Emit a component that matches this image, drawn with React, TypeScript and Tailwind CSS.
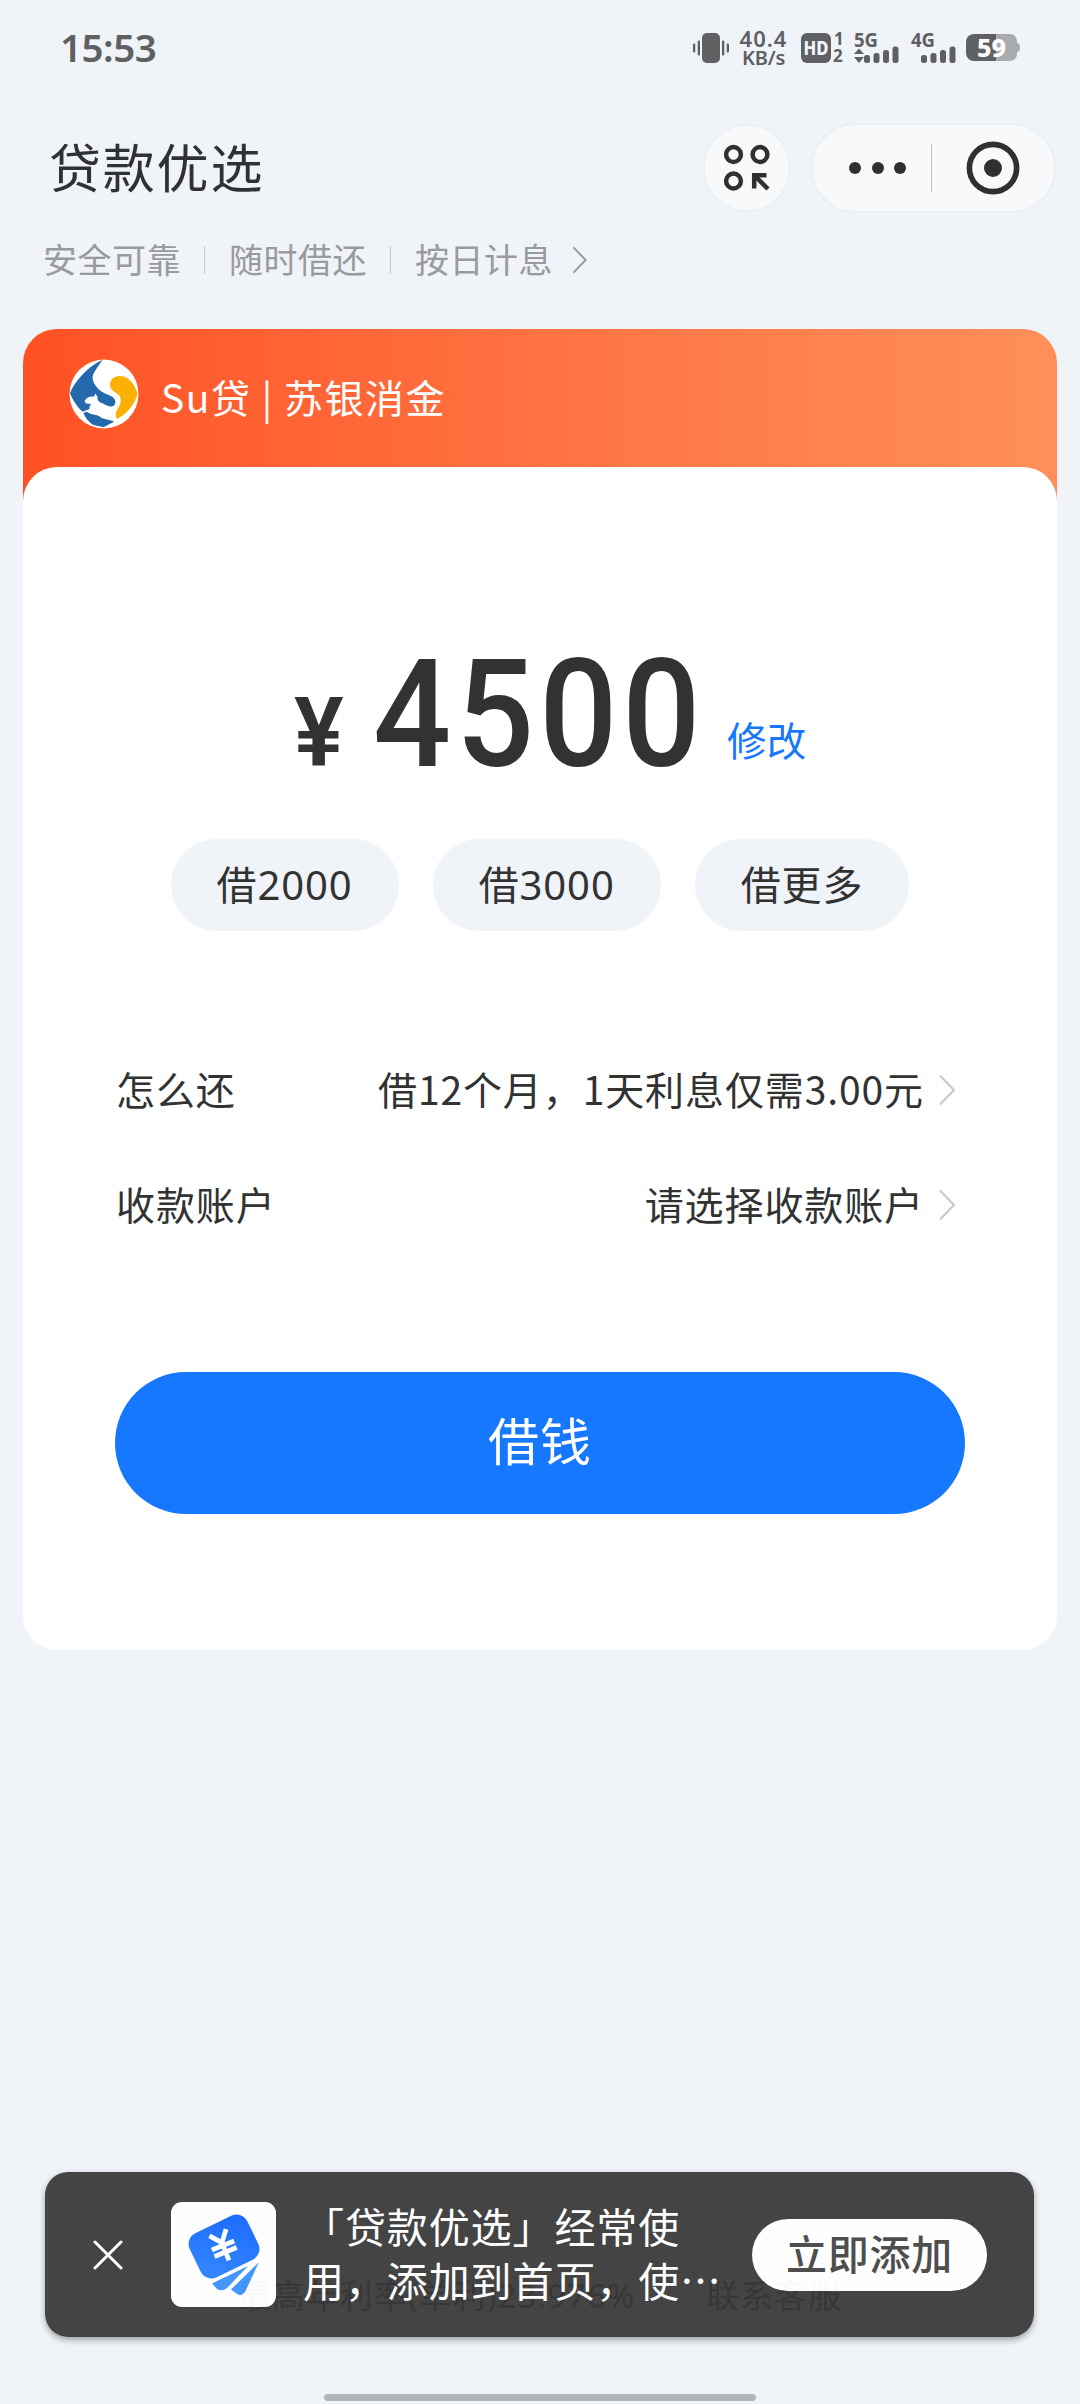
import type { ReactNode } from "react";

const presets = ["借2000", "借3000", "借更多"];

const details = [
  { label: "怎么还", value: "借12个月，1天利息仅需3.00元" },
  { label: "收款账户", value: "请选择收款账户" },
];

function Chevron({ className }: { className: string }) {
  return (
    <svg viewBox="0 0 17 32" fill="none" stroke="currentColor" className={className}>
      <path d="M1.5 1.5 15.5 16 1.5 30.5" strokeWidth="2.2" />
    </svg>
  );
}

function Signal({ label, arrows }: { label: string; arrows?: boolean }) {
  return (
    <svg width="46" height="32" viewBox="0 0 46 32" fill="#5f6062" className="overflow-visible">
      <text x="0" y="15" fontSize="20" fontWeight="700" textLength="24" lengthAdjust="spacingAndGlyphs">
        {label}
      </text>
      {arrows && <path d="M0 22 5 16.5 10 22ZM0 25h10l-5 6Z" />}
      <rect x="10" y="23" width="6" height="8" rx="2.5" />
      <rect x="19.5" y="21" width="6" height="10" rx="2.5" />
      <rect x="29" y="18" width="6" height="13" rx="2.5" />
      <rect x="38.5" y="14.5" width="6" height="16.5" rx="2.5" />
    </svg>
  );
}

function StatusBar() {
  return (
    <div className="flex h-24 shrink-0 items-center px-[60px] text-[#5f6062]">
      <span className="-mt-0.5 text-[38.5px] font-semibold leading-none tracking-[-0.5px]">15:53</span>
      <div className="ml-auto flex items-center">
        <svg width="36" height="30" viewBox="0 0 36 30" fill="#5f6062">
          <rect x="9" width="18" height="30" rx="5" />
          <rect x="4.7" y="7.5" width="2.3" height="15" rx="1" />
          <rect x="0" y="10.5" width="2.3" height="9" rx="1" />
          <rect x="29" y="7.5" width="2.3" height="15" rx="1" />
          <rect x="33.7" y="10.5" width="2.3" height="9" rx="1" />
        </svg>
        <div className="ml-[10px] mr-[2px] flex w-[49px] flex-col items-center font-semibold leading-none">
          <span className="text-[22px] leading-[19px] tracking-[1px]">40.4</span>
          <span className="text-[20px] leading-[19px] tracking-[-0.2px]">KB/s</span>
        </div>
        <svg width="44" height="32" viewBox="0 0 44 32" fill="#5f6062" className="ml-[11px] overflow-visible">
          <rect x="0" y="1" width="30" height="30" rx="6" />
          <text x="2.5" y="23" fontSize="19" fontWeight="800" fill="#f0f3f8" textLength="25" lengthAdjust="spacingAndGlyphs">HD</text>
          <text x="33" y="13" fontSize="17" fontWeight="700">1</text>
          <text x="32" y="30" fontSize="17" fontWeight="700">2</text>
        </svg>
        <div className="ml-[9px] flex"><Signal label="5G" arrows /></div>
        <div className="ml-[11px] flex"><Signal label="4G" /></div>
        <svg width="54" height="28" viewBox="0 0 54 28" className="ml-[9px] overflow-visible">
          <path d="M8 0h22v27H8a8 8 0 0 1-8-8V8a8 8 0 0 1 8-8Z" fill="#5f6062" />
          <path d="M30 0h14a7 7 0 0 1 7 7v2q3 0 3 4.5T51 18v2a7 7 0 0 1-7 7H30Z" fill="#a9abae" />
          <text x="11" y="22.5" fontSize="25" fontWeight="800" fill="#fff" textLength="29" lengthAdjust="spacingAndGlyphs">59</text>
        </svg>
      </div>
    </div>
  );
}

function TopBar() {
  return (
    <div className="flex h-36 shrink-0 items-center pl-[49px] pr-6">
      <h1 className="text-[52px] leading-none tracking-[1.8px] text-[#303134]">贷款优选</h1>
      <button className="ml-auto flex size-[88px] items-center justify-center rounded-full border-2 border-[#edf0f3] bg-[#f8f9fb]">
        <svg width="48" height="48" viewBox="0 0 48 48" fill="none" stroke="#303030" strokeWidth="4.5">
          <circle cx="10.5" cy="10.5" r="7.4" />
          <circle cx="37" cy="10.5" r="7.4" />
          <circle cx="10.5" cy="37" r="7.4" />
          <path d="M31.2 44.5V31.2H43.5M31 31 45 45" />
        </svg>
      </button>
      <div className="ml-5 flex h-[90px] w-[245px] items-center rounded-full border-2 border-[#edf0f3] bg-[#f8f9fb] pl-[36px]">
        <div className="flex gap-[10.5px]">
          <i className="size-3 rounded-full bg-[#303030]" />
          <i className="size-3 rounded-full bg-[#303030]" />
          <i className="size-3 rounded-full bg-[#303030]" />
        </div>
        <div className="ml-[25px] h-12 w-px bg-[#bcbec0]" />
        <svg width="54" height="54" viewBox="0 0 54 54" className="ml-[34px]">
          <circle cx="27" cy="27" r="23.6" fill="none" stroke="#303030" strokeWidth="5.6" />
          <circle cx="27" cy="27" r="9" fill="#303030" />
        </svg>
      </div>
    </div>
  );
}

function Tagline() {
  return (
    <div className="flex h-10 shrink-0 items-center pl-[43px] text-[34px] leading-none tracking-[0.5px] text-[#999a9d]">
      <span>安全可靠</span>
      <i className="ml-[23px] mr-[24px] h-7 w-px bg-[#c6c8cb]" />
      <span>随时借还</span>
      <i className="ml-[23px] mr-[24px] h-7 w-px bg-[#c6c8cb]" />
      <span>按日计息</span>
      <Chevron className="ml-[19px] h-7 w-[15px]" />
    </div>
  );
}

function BankLogo() {
  return (
    <svg width="70" height="70" viewBox="0 0 70 70">
      <circle cx="35" cy="35" r="34.5" fill="#fff" />
      <path
        d="M33.7 .7C26 12 23 15 23.7 20.3C25 27 31 33 39.7 36C46 38 48 43 45 46.5C42 48.5 38 47 34 44.5C30 43.5 28 41 28.5 38L26.5 34.5L25 37.5C20 37 17 39 15.5 42L17 44.5L22 45C21 47 20 48 20.5 50L13.7 52.7C8 48 3 40 1 34C6 22 18 8 33.7 .7Z"
        fill="#2468ad"
      />
      <path d="M14.3 54 18 52.7C22 56 26 55 30 57C34 61 40 60 45 62.7L35 68C30 67.5 24 66 22.7 65C19 62 16 58 14.3 54Z" fill="#2468ad" />
      <path d="M41 26C41 20 46 17 51.3 17C58 17 64 22 68.5 34C67 44 58 55 48 60C46 57 46.5 54 48.5 50C52 45 53 40 50 36C46 33 41 31 41 26Z" fill="#fbb104" />
    </svg>
  );
}

function PillButton({ children }: { children: ReactNode }) {
  return (
    <button className="h-[92px] rounded-full bg-[#f0f3f8] px-[46px] text-[40px] leading-none tracking-[0.9px] text-[#323233]">
      {children}
    </button>
  );
}

function LoanCard() {
  return (
    <section className="mx-[23px] mt-[49px] h-[1321px] shrink-0">
      <header className="flex h-[180px] items-center rounded-t-[34px] bg-linear-to-r from-[#ff5023] to-[#ff8f5a] pb-[50px] pl-[46px] font-['Noto_Sans_CJK_SC',sans-serif] text-[39px] tracking-[1.5px] text-white">
        <BankLogo />
        <span className="ml-[22px] mt-1">Su贷 | 苏银消金</span>
      </header>
      <div className="-mt-[42px] flex h-[1183px] flex-col rounded-[34px] bg-white px-[92px] pt-[190px]">
        <div className="flex h-[112px] items-end text-[#323233]">
          <span className="ml-[179px] w-[60px] origin-left scale-x-[0.96] font-['Roboto'] text-[97px] font-semibold leading-[72px]">¥</span>
          <span className="ml-[19px] w-[330px] origin-left scale-x-[0.91] font-['Roboto'] text-[151px] font-medium leading-[109px] tracking-[5.5px]">4500</span>
          <a className="mb-[6px] ml-[24px] text-[39.5px] leading-[44px] tracking-[0.2px] text-[#1677ff]">修改</a>
        </div>
        <div className="mt-[70px] flex justify-center gap-[34px]">
          {presets.map((p) => (
            <PillButton key={p}>{p}</PillButton>
          ))}
        </div>
        <div className="mt-[101px] font-['Noto_Sans_CJK_SC',sans-serif]">
          {details.map((d) => (
            <div key={d.label} className="flex h-[115px] items-center text-[39px] tracking-[0.9px] text-[#323233]">
              <span className="mb-[3px] ml-px">{d.label}</span>
              <span className="mb-[3px] ml-auto">{d.value}</span>
              <Chevron className="ml-[14px] mr-[9px] h-8 w-[18px] text-[#c8c9cc]" />
            </div>
          ))}
        </div>
        <button className="mt-[110px] h-[142px] shrink-0 rounded-full bg-[#1677ff] pb-[3px] text-[51px] tracking-[1px] text-white">借钱</button>
      </div>
    </section>
  );
}

function WalletIcon() {
  return (
    <svg width="105" height="105" viewBox="0 0 105 105">
      <defs>
        <linearGradient id="wallet" x1="1" y1="0" x2="0" y2="1">
          <stop offset="0" stopColor="#1063ff" />
          <stop offset="1" stopColor="#2c83ff" />
        </linearGradient>
      </defs>
      <rect width="105" height="105" rx="11" fill="#fff" />
      <rect x="21" y="20" width="64" height="49" rx="12" transform="rotate(-26 53 44.5)" fill="url(#wallet)" />
      <path d="M41 81.5 77 64 56 86Q51 90 46 87Z" fill="#3a93fb" />
      <path d="M60 87.5 88 60 74 90Q70 95 66 92Z" fill="#3a93fb" />
      <g transform="translate(52 43.5) rotate(-22)" stroke="#fff" strokeWidth="4.8" fill="none">
        <path d="M-9-14 0-3 9-14M0-4V16M-12 0H12M-12 7H12" />
      </g>
    </svg>
  );
}

function AddToHomeBanner() {
  return (
    <div className="absolute left-[45px] top-[2172px] flex h-[165px] w-[989px] items-center rounded-[23px] bg-[#272727]/90 pl-[48px] pr-[47px] opacity-95 shadow-[0_3px_6px_rgba(0,0,0,0.35)]">
      <svg width="30" height="30" viewBox="0 0 30 30" stroke="#fff" strokeWidth="3" strokeLinecap="round" className="shrink-0">
        <path d="M2 2 28 28M28 2 2 28" />
      </svg>
      <div className="ml-12 flex shrink-0"><WalletIcon /></div>
      <p className="mb-[2px] ml-[27px] shrink-0 whitespace-nowrap text-[41px] leading-[52px] tracking-[0.9px] text-white">
        「贷款优选」经常使
        <br />
        用，添加到首页，使<span className="font-['Noto_Sans_CJK_SC']">⋯</span>
      </p>
      <button className="ml-auto h-[72px] w-[235px] shrink-0 rounded-full bg-white text-[41px] font-medium leading-none tracking-[0.8px] text-[#464646]">
        立即添加
      </button>
    </div>
  );
}

export default function App() {
  return (
    <main className="relative flex h-[2404px] w-[1080px] flex-col overflow-hidden bg-[#f0f3f8] font-['Noto_Sans','Noto_Sans_CJK_SC',sans-serif]">
      <StatusBar />
      <TopBar />
      <Tagline />
      <LoanCard />
      <footer className="mt-auto flex h-[152px] shrink-0 flex-col items-center justify-between pb-[3px] pt-[22px]">
        <div className="flex items-center text-[33px] leading-[44px] tracking-[1px] text-[#999]">
          <span>最高年利率(单利)23.976%</span>
          <i className="mx-[35px] h-7 w-px bg-[#ccc]" />
          <span>联系客服</span>
        </div>
        <div className="h-[7px] w-[432px] rounded-full bg-[#b2b5b9]" />
      </footer>
      <AddToHomeBanner />
    </main>
  );
}
